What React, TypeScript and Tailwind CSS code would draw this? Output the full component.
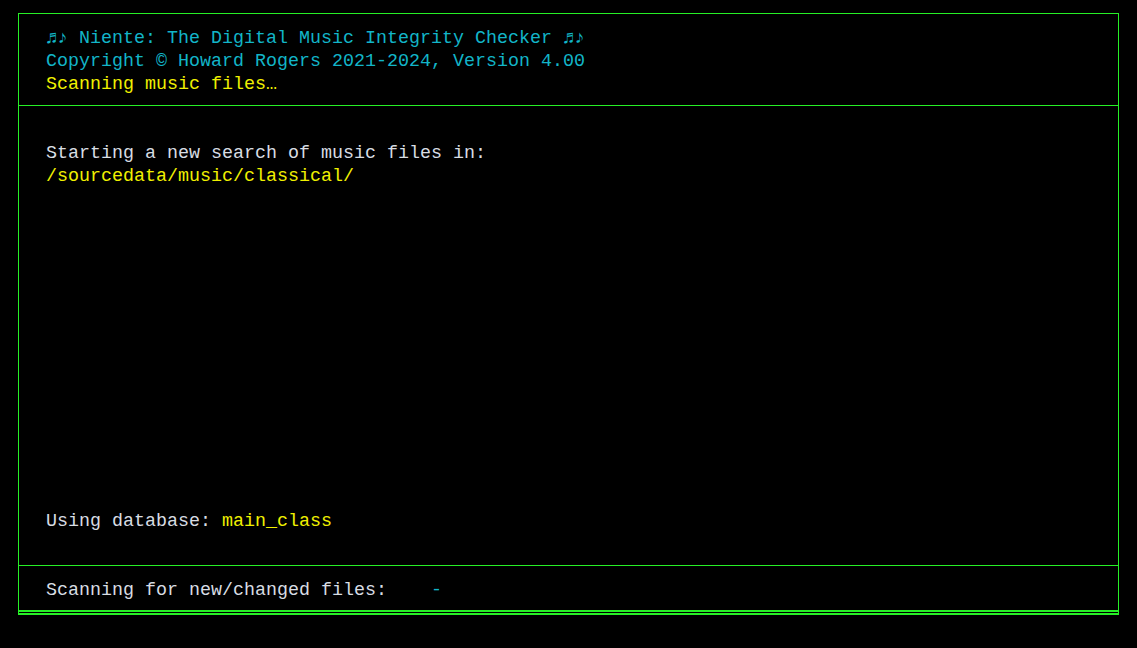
const green = "border-[#26f026]";

const App = () => {
  return (
    <div
      className="min-h-screen bg-black pt-[13px] pl-[18px] text-[18.33px] leading-[23px] text-[#d8dde3]"
      style={{ fontFamily: '"Liberation Mono", "DejaVu Sans Mono", monospace' }}
    >
      <div className={`w-[1101px] flex flex-col border border-b-2 ${green}`}>
        {/* Header */}
        <div className={`h-[92px] px-[27px] pt-[13px] border-b ${green}`}>
          <div className="text-[#12b5c8] whitespace-pre">♬♪ Niente: The Digital Music Integrity Checker ♬♪</div>
          <div className="text-[#12b5c8] whitespace-pre">Copyright © Howard Rogers 2021-2024, Version 4.00</div>
          <div className="text-[#f0f000] whitespace-pre">Scanning music files…</div>
        </div>

        {/* Body */}
        <div className={`h-[460px] px-[27px] pt-[36px] pb-[32px] flex flex-col justify-between border-b ${green}`}>
          <div>
            <div className="whitespace-pre">Starting a new search of music files in:</div>
            <div className="text-[#f0f000] whitespace-pre">/sourcedata/music/classical/</div>
          </div>
          <div className="whitespace-pre">
            Using database: <span className="text-[#f0f000]">main_class</span>
          </div>
        </div>

        {/* Status */}
        <div className={`h-[46px] px-[27px] pt-[13px] mb-[1px] border-b-2 ${green}`}>
          <div className="whitespace-pre">
            {"Scanning for new/changed files:    "}
            <span className="text-[#12b5c8]">-</span>
          </div>
        </div>
      </div>
    </div>
  );
};

export default App;
